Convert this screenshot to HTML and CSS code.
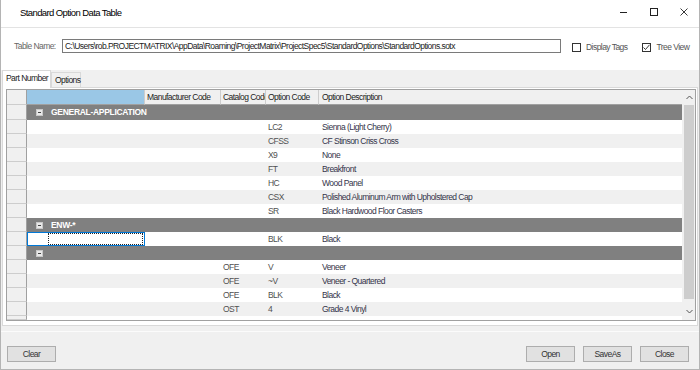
FILE: index.html
```html
<!DOCTYPE html>
<html>
<head>
<meta charset="utf-8">
<link rel="stylesheet" href="styles.css">
</head>
<body>
<div class="window">
  <div class="titlebar">
    <div class="title">Standard Option Data Table</div>
    <div class="controls">
      <div class="ctl"><svg width="8" height="8" viewBox="0 0 8 8"><line x1="0" y1="4.5" x2="7" y2="4.5" stroke="#222" stroke-width="1"/></svg></div>
      <div class="ctl"><svg width="8" height="8" viewBox="0 0 8 8"><rect x="0.5" y="0.5" width="7" height="7" fill="none" stroke="#222" stroke-width="1"/></svg></div>
      <div class="ctl"><svg width="8" height="8" viewBox="0 0 8 8"><path d="M0.5 0.5 L7.5 7.5 M7.5 0.5 L0.5 7.5" stroke="#222" stroke-width="0.9"/></svg></div>
    </div>
  </div>
  <div class="top">
    <div class="label">Table Name:</div>
    <div class="textbox">C:\Users\rob.PROJECTMATRIX\AppData\Roaming\ProjectMatrix\ProjectSpec5\StandardOptions\StandardOptions.sotx</div>
    <div class="check first"><span class="box"></span><span>Display Tags</span></div>
    <div class="check second"><span class="box"><svg width="7" height="7" viewBox="0 0 7 7"><polyline points="0.5,3.5 2.5,5.5 6.5,0.8" fill="none" stroke="#222" stroke-width="0.9"/></svg></span><span>Tree View</span></div>
  </div>
  <div class="tabs">
    <div class="tab active">Part Number</div>
    <div class="tab opt">Options</div>
  </div>
  <div class="page">
    <div class="grid">
      <div class="rows">
        <div class="row head"><div class="rh"></div><div class="hc blue"></div><div class="hc">Manufacturer Code</div><div class="hc">Catalog Code</div><div class="hc">Option Code</div><div class="hc last">Option Description</div></div>
        <div class="row group tall"><div class="rh"></div><div class="gc"><span class="tog"></span>GENERAL-APPLICATION</div></div>
        <div class="row"><div class="rh"></div><div></div><div></div><div></div><div class="code">LC2</div><div class="desc">Sienna (Light Cherry)</div></div>
        <div class="row alt"><div class="rh"></div><div></div><div></div><div></div><div class="code">CFSS</div><div class="desc">CF Stinson Criss Cross</div></div>
        <div class="row"><div class="rh"></div><div></div><div></div><div></div><div class="code">X9</div><div class="desc">None</div></div>
        <div class="row alt"><div class="rh"></div><div></div><div></div><div></div><div class="code">FT</div><div class="desc">Breakfront</div></div>
        <div class="row"><div class="rh"></div><div></div><div></div><div></div><div class="code">HC</div><div class="desc">Wood Panel</div></div>
        <div class="row alt"><div class="rh"></div><div></div><div></div><div></div><div class="code">CSX</div><div class="desc">Polished Aluminum Arm with Upholstered Cap</div></div>
        <div class="row"><div class="rh"></div><div></div><div></div><div></div><div class="code">SR</div><div class="desc">Black Hardwood Floor Casters</div></div>
        <div class="row group"><div class="rh"></div><div class="gc"><span class="tog"></span>ENW-*</div></div>
        <div class="row"><div class="rh"></div><div class="focus"><div class="dots"></div></div><div></div><div></div><div class="code">BLK</div><div class="desc">Black</div></div>
        <div class="row group"><div class="rh"></div><div class="gc"><span class="tog"></span></div></div>
        <div class="row"><div class="rh"></div><div></div><div></div><div class="code">OFE</div><div class="code">V</div><div class="desc">Veneer</div></div>
        <div class="row alt"><div class="rh"></div><div></div><div></div><div class="code">OFE</div><div class="code">~V</div><div class="desc">Veneer - Quartered</div></div>
        <div class="row"><div class="rh"></div><div></div><div></div><div class="code">OFE</div><div class="code">BLK</div><div class="desc">Black</div></div>
        <div class="row alt"><div class="rh"></div><div></div><div></div><div class="code">OST</div><div class="code">4</div><div class="desc">Grade 4 Vinyl</div></div>
        <div class="row stub"><div class="rh"></div><div></div><div></div><div></div><div></div><div></div></div>
      </div>
      <div class="vscroll">
        <div class="arrow"><svg width="7" height="5" viewBox="0 0 7 5"><polyline points="0.5,4 3.5,1 6.5,4" fill="none" stroke="#555" stroke-width="1"/></svg></div>
        <div class="thumb"></div>
        <div class="arrow down"><svg width="7" height="5" viewBox="0 0 7 5"><polyline points="0.5,1 3.5,4 6.5,1" fill="none" stroke="#555" stroke-width="1"/></svg></div>
      </div>
    </div>
  </div>
  <div class="footer">
    <div class="btn">Clear</div>
    <div class="spacer"></div>
    <div class="btn">Open</div>
    <div class="btn">SaveAs</div>
    <div class="btn">Close</div>
  </div>
</div>
</body>
</html>
```

FILE: styles.css
```css
body {
  margin: 0;
  font-family: "Liberation Sans", Arial, sans-serif;
  font-size: 8.5px;
  letter-spacing: -0.55px;
  color: #333;
}
.window {
  width: 700px;
  height: 370px;
  box-sizing: border-box;
  border: 1px solid #b4b4b4;
  border-top: none;
  background: #f0f0f0;
  display: flex;
  flex-direction: column;
}
.titlebar {
  height: 27px;
  flex: none;
  background: #fff;
  border-bottom: 1px solid #e3e3e3;
  display: flex;
  align-items: center;
}
.title {
  padding-left: 19px;
  font-size: 9.5px;
  letter-spacing: -0.6px;
  color: #000;
  flex: 1;
  margin-top: -2px;
}
.controls {
  display: flex;
  margin-top: -4px;
}
.ctl {
  width: 30px;
  height: 16px;
  display: flex;
  align-items: center;
  justify-content: center;
}
.top {
  height: 42px;
  flex: none;
  background: #fff;
  display: flex;
  align-items: flex-start;
  padding: 11px 0 0 13px;
  box-sizing: border-box;
  white-space: nowrap;
}
.label {
  width: 48px;
  line-height: 14px;
  color: #666;
}
.textbox {
  width: 499px;
  height: 14px;
  box-sizing: border-box;
  border: 1px solid #7a7a7a;
  line-height: 12px;
  padding-left: 2px;
  color: #222;
  white-space: nowrap;
  overflow: hidden;
}
.check {
  display: flex;
  align-items: center;
  margin-top: 4px;
  color: #555;
  line-height: 9px;
}
.check.first { margin-left: 11px; }
.check.second { margin-left: 15px; }
.box {
  width: 9px;
  height: 9px;
  box-sizing: border-box;
  border: 1px solid #333;
  background: #fff;
  margin-right: 5px;
  display: flex;
  align-items: center;
  justify-content: center;
}
.tabs {
  height: 17px;
  flex: none;
  display: flex;
  align-items: flex-end;
  padding-left: 1px;
  white-space: nowrap;
}
.tab {
  height: 15px;
  box-sizing: border-box;
  border: 1px solid #d9d9d9;
  border-bottom: none;
  line-height: 15px;
  color: #222;
  background: #f0f0f0;
}
.tab.opt {
  width: 30px;
  padding-left: 3px;
}
.tab.active {
  width: 49px;
  height: 18px;
  margin-bottom: -1px;
  background: #fff;
  line-height: 15px;
  padding-left: 3px;
  position: relative;
  z-index: 1;
}
.page {
  height: 239px;
  flex: none;
  margin: 0 1px;
  box-sizing: border-box;
  border: 1px solid #d9d9d9;
  background: #fff;
  padding: 1px 1px 5px 3px;
}
.grid {
  height: 232px;
  box-sizing: border-box;
  border: 1px solid #a0a0a0;
  display: flex;
}
.rows {
  flex: 1;
  overflow: hidden;
}
.row {
  display: grid;
  grid-template-columns: 20px 118px 76px 45px 53px 1fr;
  height: 14px;
  line-height: 14px;
  background: #fff;
}
.row.alt { background: #f0f0f0; }
.row.tall, .row.head { height: 15px; line-height: 15px; }
.row.stub { height: 4px; }
.rh {
  background: #f0f0f0;
  border-right: 1px solid #a0a0a0;
  border-bottom: 1px solid #cdcdcd;
  box-sizing: border-box;
}
.row > div { overflow: hidden; white-space: nowrap; }
.hc {
  background: #f0f0f0;
  border-right: 1px solid #cdcdcd;
  border-bottom: 1px solid #a0a0a0;
  box-sizing: border-box;
  padding-left: 2px;
  color: #222;
}
.hc.blue { background: #9ac7e6; }
.hc.last { border-right: none; padding-left: 3px; }
.row.group .gc {
  grid-column: 2 / -1;
  background: #808080;
  color: #fff;
  font-weight: bold;
  font-size: 8.5px;
  letter-spacing: -0.3px;
  display: flex;
  align-items: center;
  padding-left: 9px;
}
.tog {
  width: 5px;
  height: 5px;
  background: #e8e8e8;
  border: 1px solid #c8c8c8;
  margin-right: 8px;
  flex: none;
  display: flex;
  align-items: center;
  justify-content: center;
}
.tog::after {
  content: "";
  width: 3px;
  height: 1px;
  background: #444;
}
.code { padding-left: 2px; color: #505050; }
.desc { padding-left: 3px; color: #34344a; }
.focus {
  border: 1px solid #0078d7;
  box-sizing: border-box;
  display: flex;
}
.dots {
  flex: 1;
  margin: 0 1px 0 20px;
  border: 1px dotted #222;
}
.vscroll {
  width: 13px;
  flex: none;
  background: #f0f0f0;
  display: flex;
  flex-direction: column;
  box-sizing: border-box;
  padding: 0 1px 0 2px;
}
.arrow {
  height: 15px;
  display: flex;
  align-items: center;
  justify-content: center;
  flex: none;
}
.arrow.down { height: 17px; margin-top: auto; }
.thumb {
  height: 194px;
  background: #cdcdcd;
}
.footer {
  flex: 1;
  display: flex;
  align-items: flex-start;
  padding: 14px 10px 0 6px;
  border-top: 1px solid #fbfbfb;
  margin-top: 5px;
}
.spacer { flex: 1; }
.btn {
  width: 49px;
  height: 16px;
  box-sizing: border-box;
  border: 1px solid #adadad;
  background: #e1e1e1;
  text-align: center;
  line-height: 14px;
  color: #333;
  margin-left: 8px;
}
.btn:first-child { margin-left: 0; }
```
